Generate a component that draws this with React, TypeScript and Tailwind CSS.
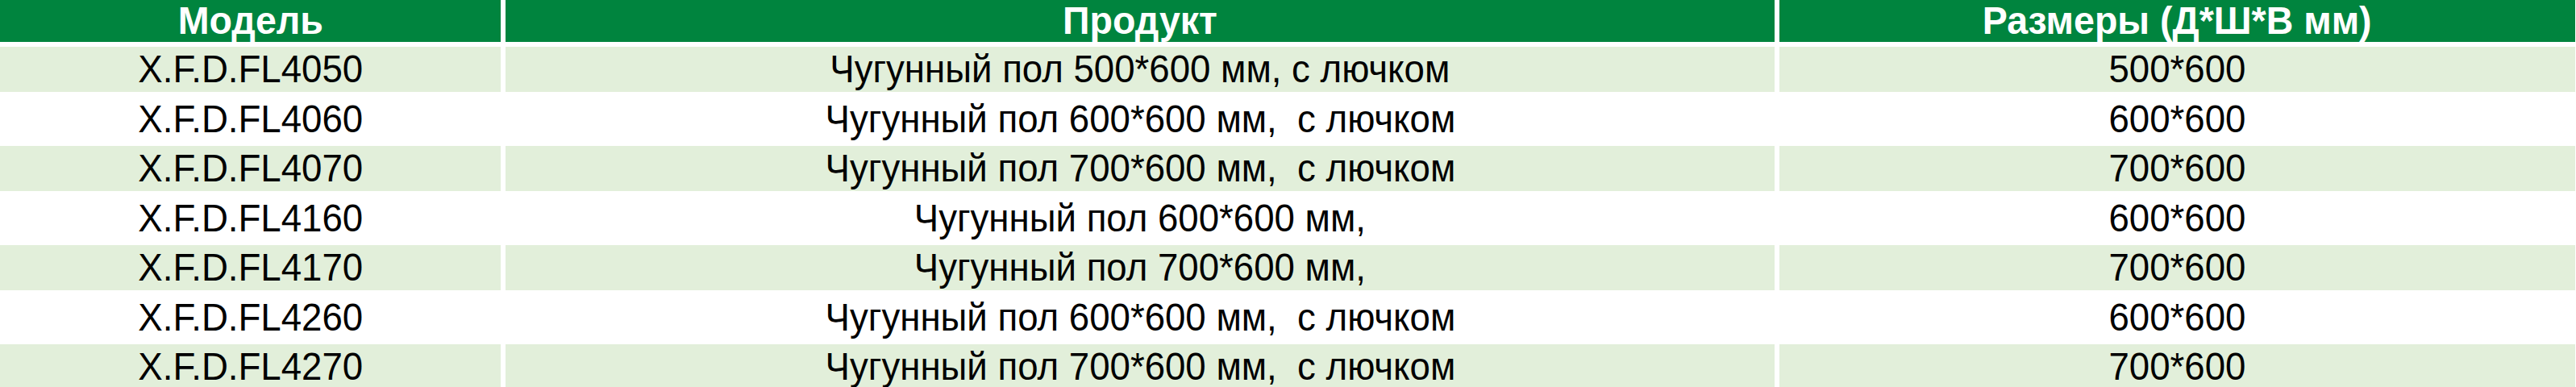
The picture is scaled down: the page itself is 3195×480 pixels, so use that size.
import React from "react";

const rows: [string, string, string][] = [
  ["X.F.D.FL4050", "Чугунный пол 500*600 мм, с лючком", "500*600"],
  ["X.F.D.FL4060", "Чугунный пол 600*600 мм,  с лючком", "600*600"],
  ["X.F.D.FL4070", "Чугунный пол 700*600 мм,  с лючком", "700*600"],
  ["X.F.D.FL4160", "Чугунный пол 600*600 мм,", "600*600"],
  ["X.F.D.FL4170", "Чугунный пол 700*600 мм,", "700*600"],
  ["X.F.D.FL4260", "Чугунный пол 600*600 мм,  с лючком", "600*600"],
  ["X.F.D.FL4270", "Чугунный пол 700*600 мм,  с лючком", "700*600"],
];

export default function App() {
  return (
    <div
      className="w-[3195px] h-[480px] overflow-hidden bg-white"
      style={{ fontFamily: '"Liberation Sans", Arial, sans-serif' }}
    >
      <div className="grid grid-cols-[621px_1574px_987px] auto-rows-[55.5px] grid-rows-[52px] gap-[6px]">
        {["Модель", "Продукт", "Размеры (Д*Ш*В мм)"].map((h) => (
          <div
            key={h}
            className="bg-[#00843e] text-white font-bold text-[49px] leading-[1.15] flex items-center justify-center whitespace-pre"
          >
            <span className="inline-block scale-x-[0.95] -translate-y-[1px]">{h}</span>
          </div>
        ))}
        {rows.map((r, i) =>
          r.map((c, j) => (
            <div
              key={`${i}-${j}`}
              className={`${i % 2 === 0 ? "bg-[#e2efda]" : "bg-white"} text-black text-[48px] leading-[1.15] flex items-center justify-center whitespace-pre`}
            >
              <span className="inline-block scale-x-[0.95]">{c}</span>
            </div>
          ))
        )}
      </div>
    </div>
  );
}
